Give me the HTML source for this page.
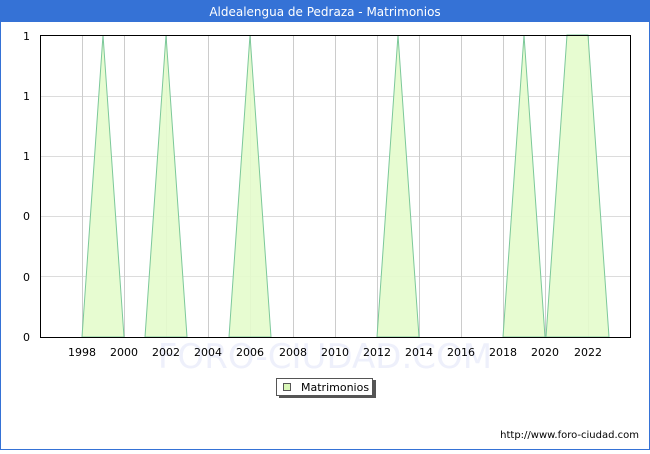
<!DOCTYPE html>
<html><head><style>
body{margin:0;width:650px;height:450px;overflow:hidden;font-family:"DejaVu Sans","Liberation Sans",sans-serif;}
</style></head><body>
<svg width="650" height="450" xmlns="http://www.w3.org/2000/svg" font-family="DejaVu Sans, Liberation Sans, sans-serif">
<rect x="0" y="0" width="650" height="450" fill="#3572d6"/>
<rect x="1" y="22" width="648" height="427" fill="#fff"/>
<text x="325" y="16" font-size="12" fill="#fff" text-anchor="middle">Aldealengua de Pedraza - Matrimonios</text>
<g stroke="#dcdcdc" stroke-width="1">
<line x1="40" y1="96.5" x2="630" y2="96.5"/><line x1="40" y1="156.5" x2="630" y2="156.5"/>
<line x1="40" y1="216.5" x2="630" y2="216.5"/><line x1="40" y1="276.5" x2="630" y2="276.5"/>
</g>
<g stroke="#cccccc" stroke-width="1">
<line x1="82.5" y1="35" x2="82.5" y2="337"/><line x1="124.5" y1="35" x2="124.5" y2="337"/>
<line x1="166.5" y1="35" x2="166.5" y2="337"/><line x1="208.5" y1="35" x2="208.5" y2="337"/>
<line x1="250.5" y1="35" x2="250.5" y2="337"/><line x1="293.5" y1="35" x2="293.5" y2="337"/>
<line x1="335.5" y1="35" x2="335.5" y2="337"/><line x1="377.5" y1="35" x2="377.5" y2="337"/>
<line x1="419.5" y1="35" x2="419.5" y2="337"/><line x1="461.5" y1="35" x2="461.5" y2="337"/>
<line x1="503.5" y1="35" x2="503.5" y2="337"/><line x1="545.5" y1="35" x2="545.5" y2="337"/>
<line x1="588.5" y1="35" x2="588.5" y2="337"/>
</g>
<text x="325" y="368" font-size="34" fill="#eef0fb" text-anchor="middle">FORO-CIUDAD.COM</text>
<g fill="#e4fccc" fill-opacity="0.9" stroke="#7cc89a" stroke-width="1">
<polygon points="82,337 103,35 124,337"/>
<polygon points="145,337 166,35 187,337"/>
<polygon points="229,337 250,35 271,337"/>
<polygon points="377,337 398,35 419,337"/>
<polygon points="503,337 524,35 545,337"/>
<polygon points="546,337 567,35 588,35 609,337"/>
</g>
<rect x="40.5" y="35.5" width="590" height="302" fill="none" stroke="#000" stroke-width="1"/>
<g font-size="11" fill="#000">
<text x="30" y="40" text-anchor="end">1</text><text x="30" y="100" text-anchor="end">1</text>
<text x="30" y="160" text-anchor="end">1</text><text x="30" y="220" text-anchor="end">0</text>
<text x="30" y="281" text-anchor="end">0</text><text x="30" y="341" text-anchor="end">0</text>
<g text-anchor="middle">
<text x="82" y="356">1998</text><text x="124" y="356">2000</text><text x="166" y="356">2002</text>
<text x="208" y="356">2004</text><text x="250" y="356">2006</text><text x="293" y="356">2008</text>
<text x="335" y="356">2010</text><text x="377" y="356">2012</text><text x="419" y="356">2014</text>
<text x="461" y="356">2016</text><text x="503" y="356">2018</text><text x="545" y="356">2020</text>
<text x="588" y="356">2022</text></g>
</g>
<rect x="279" y="380" width="97" height="18" fill="#555"/>
<rect x="276.5" y="378.5" width="96" height="17" fill="#fff" stroke="#555"/>
<rect x="283.5" y="383.5" width="7" height="7" fill="#d9f7b8" stroke="#555"/>
<text x="301" y="391" font-size="11">Matrimonios</text>
<text x="639" y="438" font-size="10" text-anchor="end">http://www.foro-ciudad.com</text>
</svg>
</body></html>
